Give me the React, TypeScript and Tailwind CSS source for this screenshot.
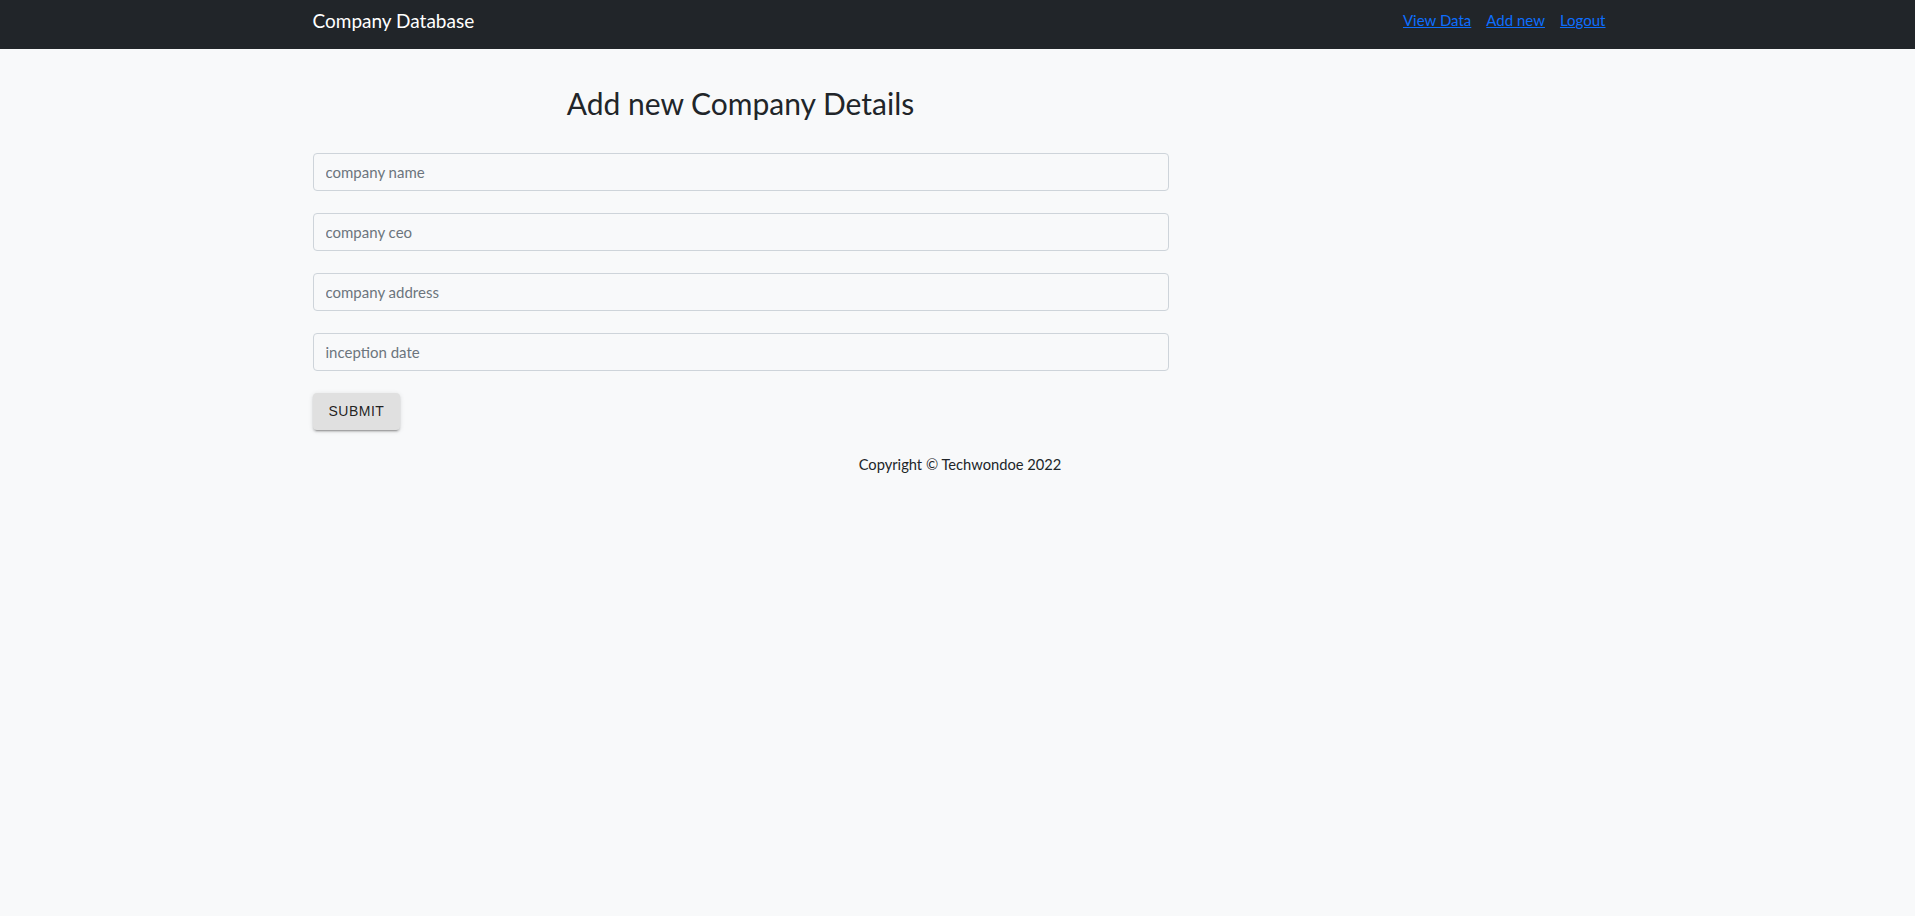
import React from "react";

const font = { fontFamily: "Lato, 'Noto Sans', 'Liberation Sans', sans-serif" };

export default function App() {
  const fields = ["company name", "company ceo", "company address", "inception date"];
  return (
    <div className="min-h-[916px] bg-[#f8f9fa] text-[#212529]" style={font}>
      <nav className="h-[49px] bg-[#212529] flex items-center pb-[8px]">
        <div className="w-[1320px] mx-auto px-[12px] flex items-center justify-between">
          <span className="text-white text-[19px] pl-[3px] leading-none">Company Database</span>
          <div className="flex items-center gap-[15px] text-[15px] pr-[0px]">
            <a href="#" className="text-[#0d6efd] underline">View Data</a>
            <a href="#" className="text-[#0d6efd] underline">Add new</a>
            <a href="#" className="text-[#0d6efd] underline">Logout</a>
          </div>
        </div>
      </nav>
      <div className="w-[1320px] mx-auto px-[12px]">
        <div className="w-[856px] ml-[3px]">
          <h3 className="text-[30px] text-center leading-[1.2] mt-[36px] mb-[32px] text-[#212529]">Add new Company Details</h3>
          <form className="flex flex-col gap-[22px]" onSubmit={(e) => e.preventDefault()}>
            {fields.map((f) => (
              <input
                key={f}
                placeholder={f}
                className="h-[38px] w-full rounded-[4px] border border-[#ced4da] bg-[#f8f9fa] px-[12px] text-[15px] placeholder:text-[#6c757d] outline-none"
                style={font}
              />
            ))}
            <div>
              <button
                type="submit"
                className="h-[37px] px-[16px] rounded-[4px] bg-[#e0e0e0] text-[14px] font-normal tracking-[0.5px] text-[rgba(0,0,0,0.87)] shadow-[0_3px_1px_-2px_rgba(0,0,0,0.2),0_2px_2px_0_rgba(0,0,0,0.14),0_1px_5px_0_rgba(0,0,0,0.12)]"
                style={{ fontFamily: "'Liberation Sans', Arial, sans-serif" }}
              >
                SUBMIT
              </button>
            </div>
          </form>
        </div>
      </div>
      <p className="text-center text-[14.7px] mt-[23px] pl-[5px]">Copyright © Techwondoe 2022</p>
    </div>
  );
}
